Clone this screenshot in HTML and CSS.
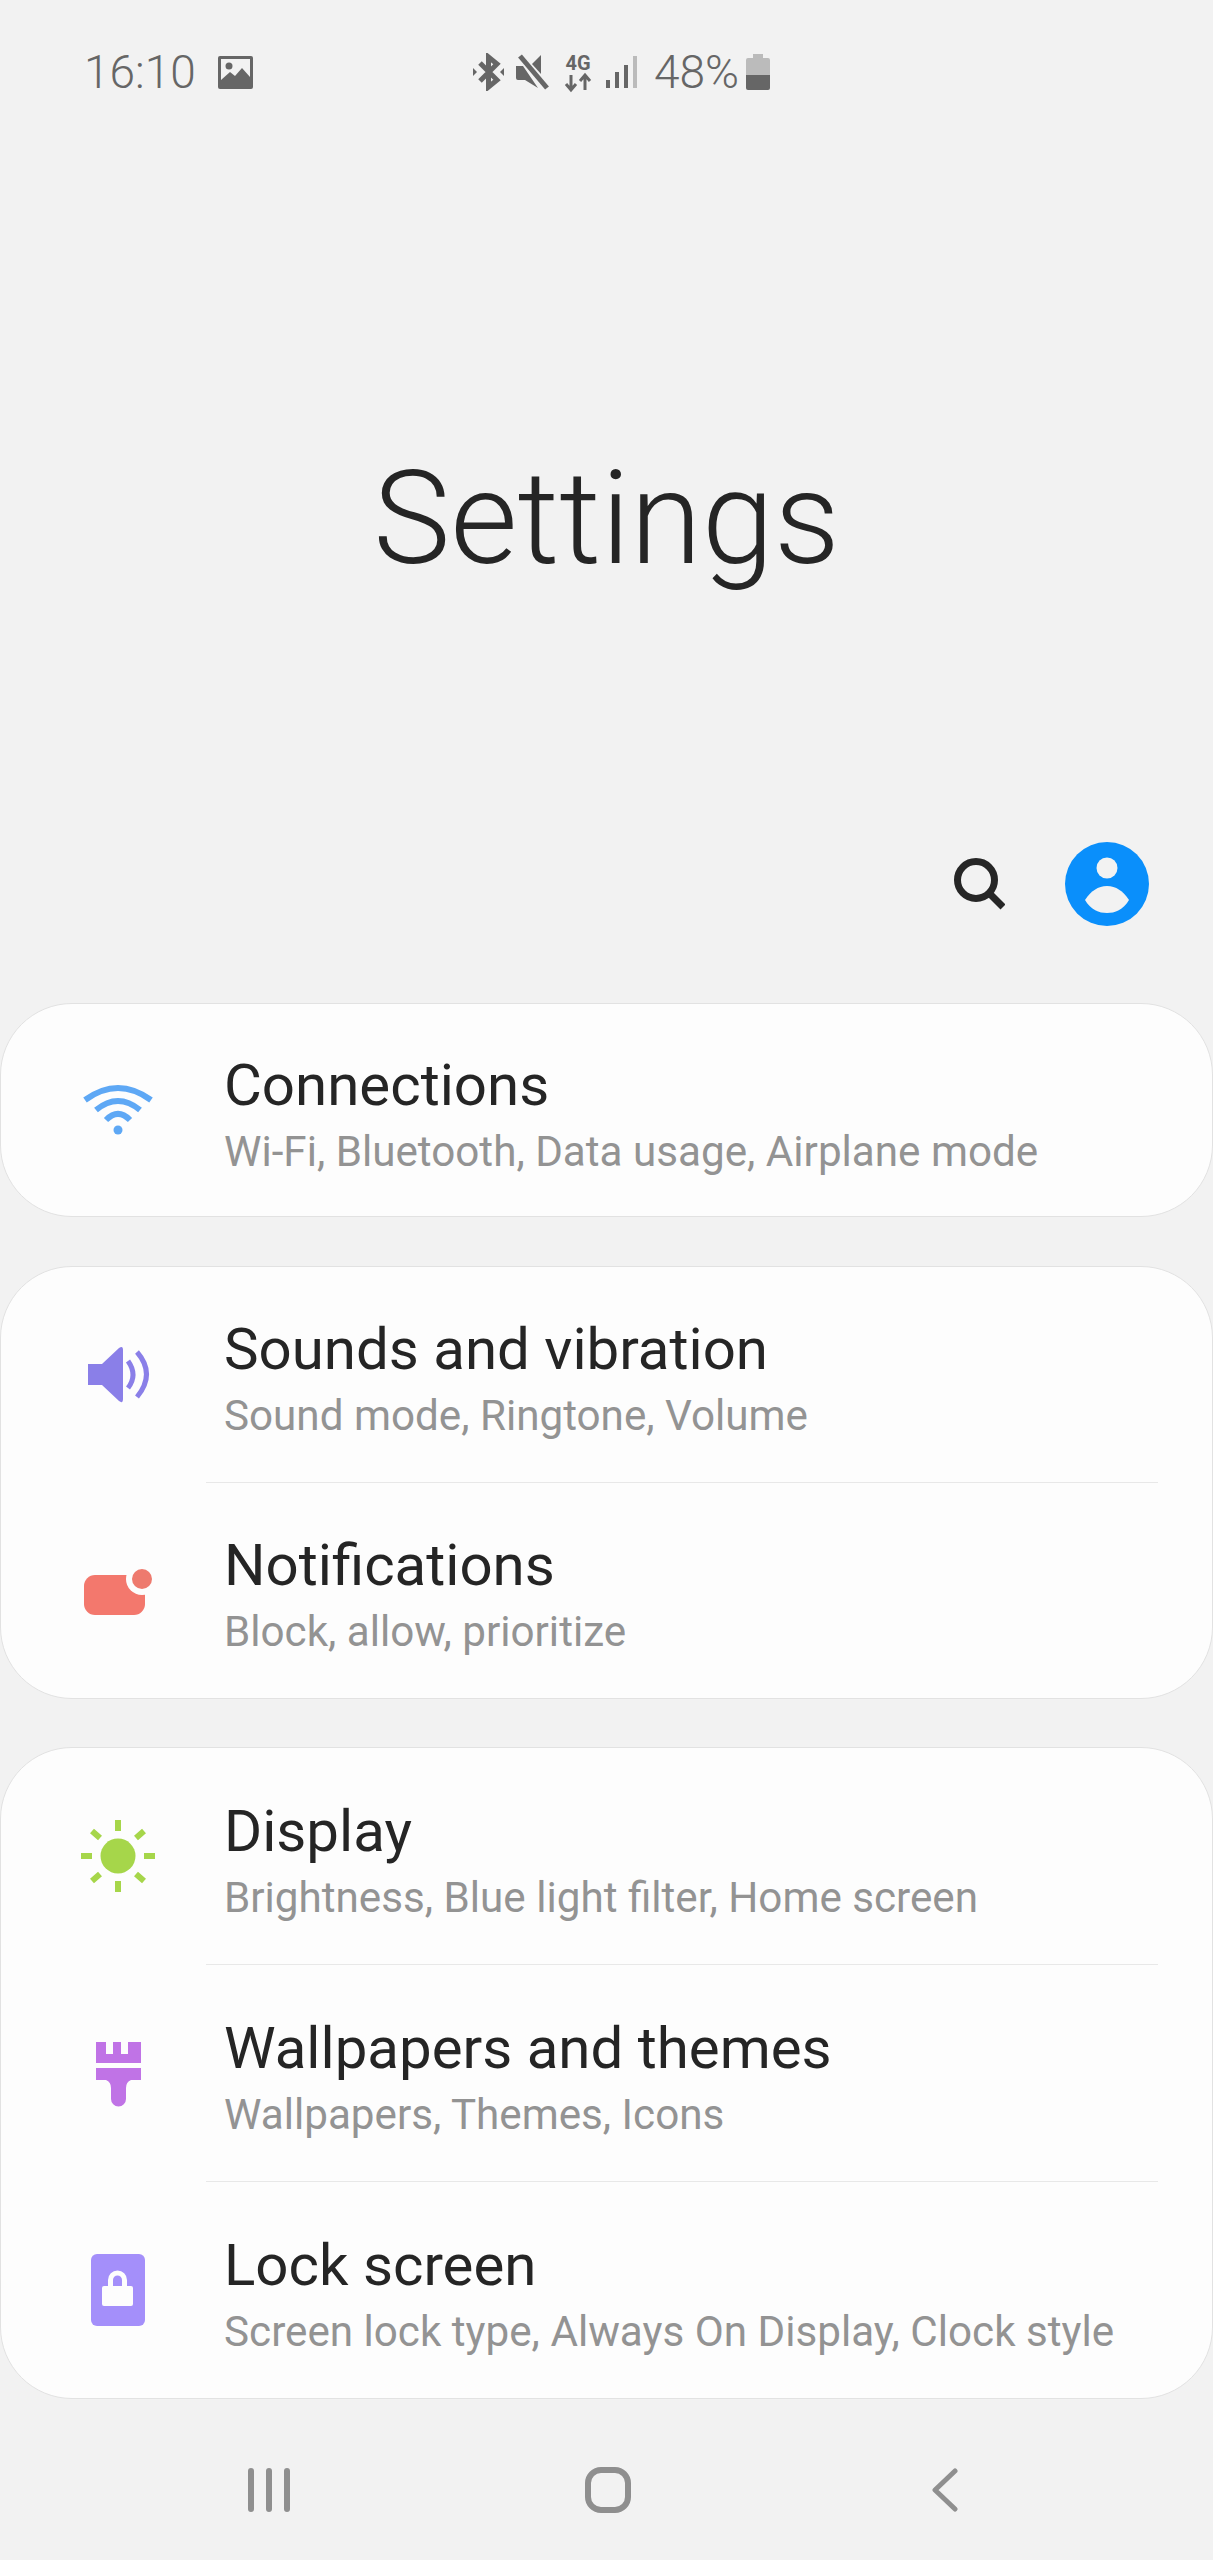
FILE: index.html
```html
<!DOCTYPE html>
<html lang="en">
<head>
    <meta charset="UTF-8">
    <meta name="viewport" content="width=device-width, initial-scale=1.0">
    <title>Settings</title>
    <link rel="stylesheet" href="styles.css">
</head>
<body>
    <div class="status-bar">
        <div class="status-left">
            <span class="status-time">16:10</span>
            <svg class="icon-image" width="35" height="33" viewBox="0 0 35 33">
                <rect width="35" height="33" rx="2" fill="#666"/>
                <rect x="3" y="3" width="29" height="27" fill="#f2f2f2"/>
                <circle cx="11" cy="10" r="3.5" fill="#666"/>
                <path d="M3 24 L12 16 L17 20 L24 12 L32 21 V30 H3 Z" fill="#666"/>
            </svg>
        </div>
        <div class="status-right">
            <svg class="icon-bluetooth" width="33" height="38" viewBox="0 0 33 38" fill="none" stroke="#666" stroke-width="5">
                <path d="M8 10 L25 27 L16.500 34 V4 L25 11 L8 28"/>
                <path d="M1 15 L5 19 L1 23 Z M32 15 L28 19 L32 23 Z" fill="#666" stroke="none"/>
            </svg>
            <svg width="34" height="36" viewBox="0 0 34 36" fill="#666">
                <path d="M0 12 H7 L22 34 L9 26 H2 Q0 26 0 24 Z"/>
                <path d="M16 10 L25 1 V20 Z"/>
                <path d="M4 2 L31 34" fill="none" stroke="#666" stroke-width="5"/>
            </svg>
            <svg width="28" height="44" viewBox="0 -4 28 44">
                <text class="label-4g" x="14" y="16" text-anchor="middle">4G</text>
                <path d="M7 21 V35 M2 30 L7 36 L12 30 M21 36 V22 M16 27 L21 21 L26 27" fill="none" stroke="#666" stroke-width="3"/>
            </svg>
            <svg width="32" height="32" viewBox="0 0 32 32">
                <rect x="0" y="24" width="4" height="8" fill="#666"/>
                <rect x="9" y="16" width="4" height="16" fill="#666"/>
                <rect x="18" y="9" width="4" height="23" fill="#666"/>
                <rect x="27" y="0" width="4" height="32" fill="#bbb"/>
            </svg>
            <span class="status-percent">48%</span>
            <svg class="icon-battery" width="24" height="36" viewBox="0 0 24 36">
                <path d="M7 0 H17 V4 H22 Q24 4 24 6 V22 H0 V6 Q0 4 2 4 H7 Z" fill="#bbb"/>
                <path d="M0 21 H24 V34 Q24 36 22 36 H2 Q0 36 0 34 Z" fill="#666"/>
            </svg>
        </div>
    </div>

    <h1 class="page-title">Settings</h1>

    <div class="actions">
        <svg width="52" height="52" viewBox="0 0 52 52" fill="none" stroke="#262626" stroke-width="7">
            <circle cx="23" cy="22" r="18.500"/>
            <path d="M37 36 L50 49"/>
        </svg>
        <svg width="84" height="84" viewBox="0 0 84 84">
            <circle cx="42" cy="42" r="42" fill="#0a8ffb"/>
            <circle cx="42" cy="26" r="10.500" fill="#f2f2f2"/>
            <path d="M20 58 C26 49 33 44 42 44 C51 44 58 49 64 58 C58 68 50 71 42 71 C34 71 26 68 20 58 Z" fill="#f2f2f2"/>
        </svg>
    </div>

    <div class="card card-single">
        <div class="row">
            <svg class="row-icon" width="80" height="80" viewBox="0 0 80 80" fill="none" stroke="#5ea8f5" stroke-width="6" stroke-linejoin="round">
                <path d="M7 30 Q40 6 73 30"/>
                <path d="M18 40 Q40 22 62 40"/>
                <path d="M28 50 Q40 38 52 50"/>
                <circle cx="40" cy="60" r="4.500" fill="#5ea8f5" stroke="none"/>
            </svg>
            <div class="row-text">
                <div class="row-title">Connections</div>
                <div class="row-sub">Wi-Fi, Bluetooth, Data usage, Airplane mode</div>
            </div>
        </div>
    </div>

    <div class="card card-double">
        <div class="row">
            <svg class="row-icon" width="80" height="80" viewBox="0 0 80 80" fill="none">
                <path d="M10 29 H24 L41 13 Q45 10 45 15 V64 Q45 69 41 66 L24 50 H10 Z" fill="#8a7fe8"/>
                <path d="M50 26 Q60 40 50 53" stroke="#8a7fe8" stroke-width="5"/>
                <path d="M59 17 Q78 39 59 62" stroke="#8a7fe8" stroke-width="5"/>
            </svg>
            <div class="row-text">
                <div class="row-title">Sounds and vibration</div>
                <div class="row-sub">Sound mode, Ringtone, Volume</div>
            </div>
        </div>
        <div class="divider"></div>
        <div class="row">
            <svg class="row-icon" width="80" height="80" viewBox="0 0 80 80">
                <rect x="6" y="24" width="61" height="40" rx="11" fill="#f3786d"/>
                <circle cx="64" cy="28" r="16" fill="#fdfdfd"/>
                <circle cx="64" cy="28" r="10" fill="#ee7a6e"/>
            </svg>
            <div class="row-text">
                <div class="row-title">Notifications</div>
                <div class="row-sub">Block, allow, prioritize</div>
            </div>
        </div>
    </div>

    <div class="card">
        <div class="row">
            <svg class="row-icon" width="80" height="80" viewBox="0 0 80 80" fill="none" stroke="#a6d64a" stroke-width="6">
                <circle cx="40" cy="40" r="17.500" fill="#a6d64a" stroke="none"/>
                <path d="M40 4 V15 M40 65 V76 M3 40 H14 M66 40 H77"/>
                <path d="M14 15 L22 22 M66 15 L58 22 M14 65 L22 58 M66 65 L58 58"/>
            </svg>
            <div class="row-text">
                <div class="row-title">Display</div>
                <div class="row-sub">Brightness, Blue light filter, Home screen</div>
            </div>
        </div>
        <div class="divider"></div>
        <div class="row">
            <svg class="row-icon" width="80" height="80" viewBox="0 0 80 80">
                <path d="M18 9 H28 V21 H35 V9 H43 V21 H50 V9 H63 V30 H18 Z" fill="#c073e6"/>
                <path d="M18 35 H63 V47 H53 Q48 49 48 55 V66 A7.500 7.500 0 0 1 33 66 V55 Q33 49 28 47 H18 Z" fill="#c073e6"/>
            </svg>
            <div class="row-text">
                <div class="row-title">Wallpapers and themes</div>
                <div class="row-sub">Wallpapers, Themes, Icons</div>
            </div>
        </div>
        <div class="divider"></div>
        <div class="row">
            <svg class="row-icon" width="80" height="80" viewBox="0 0 80 80">
                <rect x="13" y="4" width="54" height="72" rx="6" fill="#a48ffa"/>
                <rect x="24" y="36" width="31" height="20" rx="2" fill="#fdfdfd"/>
                <path d="M32.500 38 V30 A7 7 0 0 1 46.500 30 V38" fill="none" stroke="#fdfdfd" stroke-width="5"/>
            </svg>
            <div class="row-text">
                <div class="row-title">Lock screen</div>
                <div class="row-sub">Screen lock type, Always On Display, Clock style</div>
            </div>
        </div>
    </div>

    <div class="nav-bar">
        <svg class="nav-recent" width="42" height="44" viewBox="0 0 42 44" fill="none" stroke="#8f8f8f" stroke-width="6" stroke-linecap="round">
            <path d="M3 3 V41 M21 3 V41 M39 3 V41"/>
        </svg>
        <svg class="nav-home" width="46" height="46" viewBox="0 0 46 46" fill="none" stroke="#8f8f8f" stroke-width="6">
            <rect x="3" y="3" width="40" height="40" rx="13"/>
        </svg>
        <svg width="26" height="44" viewBox="0 0 26 44" fill="none" stroke="#8f8f8f" stroke-width="5" stroke-linecap="round" stroke-linejoin="round">
            <path d="M23 3 L3 22 L23 41"/>
        </svg>
    </div>
</body>
</html>
```

FILE: styles.css
```css
body {
    margin: 0;
    background: #f2f2f2;
    font-family: Roboto, "Liberation Sans", sans-serif;
    color: #252525;
}
.status-bar {
    display: flex;
    align-items: center;
    height: 144px;
    color: #666;
    padding-left: 84px;
}
.status-left {
    display: flex;
    align-items: center;
    width: 388px;
    gap: 22px;
}
.status-time {
    font-size: 46px;
    font-weight: 300;
}
.status-right {
    display: flex;
    align-items: center;
    gap: 14px;
}
.icon-bluetooth {
    margin-right: -3px;
}
.status-percent {
    font-size: 46px;
    font-weight: 300;
    margin-left: 2px;
    margin-right: -7px;
}
.label-4g {
    font-size: 20px;
    font-weight: 700;
    fill: #666;
}
.page-title {
    margin: 0;
    height: 576px;
    padding-top: 300px;
    box-sizing: border-box;
    text-align: center;
    font-size: 130px;
    line-height: 150px;
    font-weight: 300;
}
.actions {
    display: flex;
    justify-content: flex-end;
    align-items: center;
    gap: 60px;
    height: 84px;
    padding-right: 64px;
    margin-top: 122px;
    margin-bottom: 77px;
}
.card {
    background: #fdfdfd;
    border: 1px solid #e2e2e2;
    border-radius: 72px;
    margin-bottom: 48px;
}
.card-single {
    margin-bottom: 49px;
}
.row {
    display: flex;
    align-items: center;
    height: 216px;
    padding-left: 77px;
}
.card-single .row {
    height: 212px;
}
.card-double .row {
    height: 215px;
}
.row-icon {
    flex-shrink: 0;
    margin-right: 66px;
}
.row-text {
    padding-top: 10px;
}
.row-title {
    font-size: 58.200px;
    line-height: 66px;
}
.row-sub {
    margin-top: 7px;
    font-size: 42.200px;
    line-height: 54px;
    color: #939393;
}
.divider {
    height: 1px;
    margin-left: 205px;
    margin-right: 54px;
    background: #e8e8e8;
}
.nav-bar {
    display: flex;
    justify-content: center;
    align-items: center;
    margin-top: 68px;
    padding-right: 8px;
}
.nav-recent {
    margin-right: 295px;
}
.nav-home {
    margin-right: 301px;
}
```
